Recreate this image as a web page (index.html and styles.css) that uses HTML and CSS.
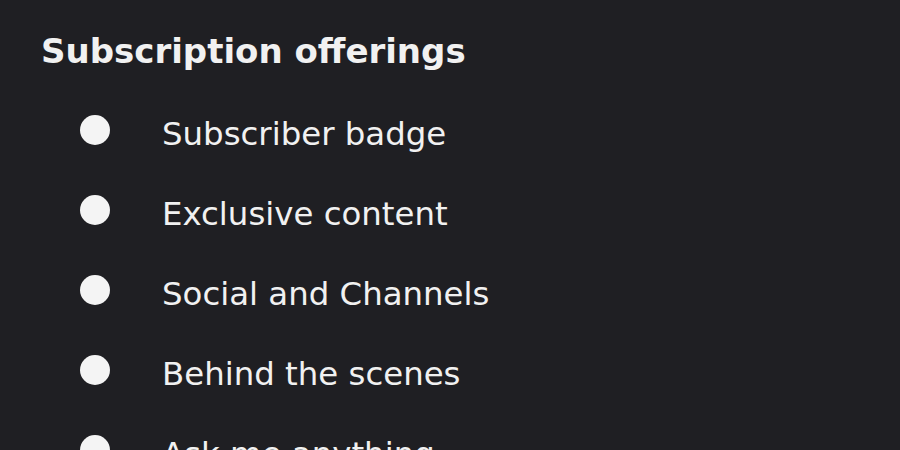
FILE: index.html
```html
<!DOCTYPE html>
<html>
<head>
<meta charset="utf-8">
<link rel="stylesheet" href="styles.css">
</head>
<body>
<section class="panel">
  <h2 class="title">Subscription offerings</h2>
  <ul class="list">
    <li class="item"><span class="dot"></span><span class="label">Subscriber badge</span></li>
    <li class="item"><span class="dot"></span><span class="label">Exclusive content</span></li>
    <li class="item"><span class="dot"></span><span class="label">Social and Channels</span></li>
    <li class="item"><span class="dot"></span><span class="label">Behind the scenes</span></li>
    <li class="item"><span class="dot"></span><span class="label">Ask me anything</span></li>
  </ul>
</section>
</body>
</html>
```
FILE: styles.css
```css
html, body {
  margin: 0;
  padding: 0;
  background: #1f1f23;
  height: 100%;
  overflow: hidden;
}
.panel {
  padding: 29px 0 0 41px;
  font-family: "DejaVu Sans", sans-serif;
  color: #f1f1f1;
}
.title {
  margin: 0;
  font-size: 34px;
  font-weight: 700;
  line-height: 44px;
  white-space: nowrap;
}
.list {
  list-style: none;
  margin: 17px 0 0 0;
  padding: 0 0 0 39px;
}
.item {
  display: flex;
  align-items: center;
  height: 80px;
}
.dot {
  width: 30px;
  height: 30px;
  border-radius: 50%;
  background: #f4f4f4;
  flex: none;
}
.label {
  margin-left: 52px;
  padding-top: 7px;
  font-size: 32.4px;
  line-height: 40px;
  white-space: nowrap;
}
```
